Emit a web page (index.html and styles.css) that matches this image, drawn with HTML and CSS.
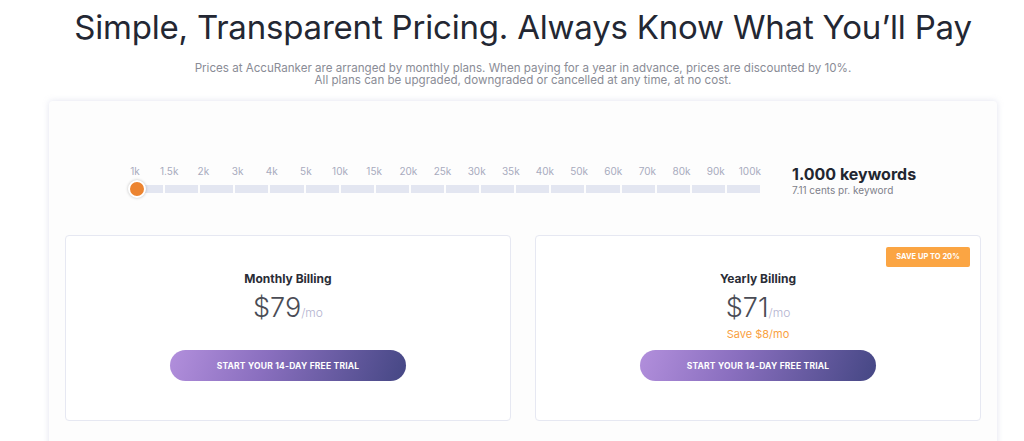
FILE: index.html
```html
<!DOCTYPE html>
<html lang="en">
<head>
  <meta charset="UTF-8">
  <meta name="viewport" content="width=device-width, initial-scale=1.0">
  <title>Pricing</title>
  <link rel="stylesheet" href="styles.css">
</head>
<body>
  <h1 class="title">Simple, Transparent Pricing. Always Know What You’ll Pay</h1>
  <p class="intro">
    Prices at AccuRanker are arranged by monthly plans. When paying for a year in advance, prices are discounted by 10%.<br>
    All plans can be upgraded, downgraded or cancelled at any time, at no cost.
  </p>

  <div class="panel">
    <div class="slider-row">
      <div class="slider">
        <div class="ticks">
          <span>1k</span><span>1.5k</span><span>2k</span><span>3k</span><span>4k</span>
          <span>5k</span><span>10k</span><span>15k</span><span>20k</span><span>25k</span>
          <span>30k</span><span>35k</span><span>40k</span><span>50k</span><span>60k</span>
          <span>70k</span><span>80k</span><span>90k</span><span>100k</span>
        </div>
        <div class="track">
          <span></span><span></span><span></span><span></span><span></span><span></span>
          <span></span><span></span><span></span><span></span><span></span><span></span>
          <span></span><span></span><span></span><span></span><span></span><span></span>
          <div class="knob"></div>
        </div>
      </div>
      <div class="keyword-info">
        <div class="keyword-count">1.000 keywords</div>
        <div class="keyword-price">7.11 cents pr. keyword</div>
      </div>
    </div>

    <div class="plans">
      <div class="plan">
        <h2>Monthly Billing</h2>
        <div class="price">$79<span>/mo</span></div>
        <div class="save"></div>
        <button class="trial">Start your 14-day free trial</button>
      </div>
      <div class="plan">
        <div class="badge">Save up to 20%</div>
        <h2>Yearly Billing</h2>
        <div class="price">$71<span>/mo</span></div>
        <div class="save">Save $8/mo</div>
        <button class="trial">Start your 14-day free trial</button>
      </div>
    </div>
  </div>
</body>
</html>
```

FILE: styles.css
```css
body {
  margin: 0;
  background-color: #ffffff;
  font-family: Inter, "Noto Sans", sans-serif;
  color: #232733;
  overflow: hidden;
}

.title {
  margin: 5px 0 0;
  font-size: 33px;
  line-height: 44px;
  font-weight: 400;
  text-align: center;
  padding-left: 22px;
  letter-spacing: -0.2px;
}

.intro {
  margin: 13px 0 0;
  padding-left: 22px;
  font-size: 11.6px;
  line-height: 12px;
  color: #8a8c96;
  text-align: center;
}

.panel {
  margin: 15px 0 0 49px;
  width: 948px;
  height: 400px;
  box-sizing: border-box;
  padding: 0 16px;
  background-color: #fdfdfd;
  border-radius: 4px;
  box-shadow: 0 0 6px rgba(170, 175, 210, 0.35);
}

/* slider */
.slider-row {
  display: flex;
  align-items: center;
  height: 134px;
  padding-top: 20px;
  box-sizing: border-box;
}

.slider {
  margin-left: 53px;
  width: 650px;
}

.ticks {
  display: grid;
  grid-template-columns: repeat(19, 34.17px);
  font-size: 10px;
  line-height: 14px;
  color: #a8abbe;
  text-align: center;
}

.track {
  position: relative;
  display: flex;
  gap: 2px;
  margin: 7px 0 0 12px;
  width: 630px;
}

.track span {
  flex: 1;
  height: 8px;
  background-color: #e3e6f1;
}

.track span:first-child {
  border-radius: 4px 0 0 4px;
}

.track span:last-child {
  border-radius: 0 4px 4px 0;
}

.knob {
  position: absolute;
  left: -2px;
  top: -5px;
  width: 14px;
  height: 14px;
  border-radius: 50%;
  background-color: #ec8430;
  border: 2px solid #ffffff;
  box-shadow: 0 0 3px rgba(0, 0, 0, 0.25);
}

.keyword-info {
  margin-left: 24px;
  margin-top: 4px;
}

.keyword-count {
  font-size: 16px;
  line-height: 20px;
  font-weight: 700;
  color: #222630;
}

.keyword-price {
  font-size: 10px;
  line-height: 12px;
  color: #7d7f8a;
}

/* plan cards */
.plans {
  display: flex;
  gap: 24px;
}

.plan {
  position: relative;
  flex: 1;
  height: 186px;
  box-sizing: border-box;
  padding-top: 35px;
  background-color: #ffffff;
  border: 1px solid #e6e8f2;
  border-radius: 4px;
  text-align: center;
}

.plan h2 {
  margin: 0;
  font-size: 12px;
  line-height: 16px;
  font-weight: 700;
  color: #2a2d36;
}

.price {
  margin-top: 5px;
  font-size: 27px;
  line-height: 32px;
  font-weight: 300;
  color: #4a4c55;
}

.price span {
  font-size: 12px;
  color: #b3b3cf;
}

.save {
  height: 12px;
  margin: -1px 0 10px;
  font-size: 11px;
  line-height: 12px;
  color: #f9a13f;
}

.trial {
  width: 236px;
  height: 31px;
  border: none;
  border-radius: 16px;
  background: linear-gradient(110deg, #b28fdc 0%, #8a6fbf 40%, #454784 100%);
  color: #ffffff;
  font-family: inherit;
  font-size: 8.5px;
  font-weight: 700;
  letter-spacing: 0.2px;
  text-transform: uppercase;
}

.badge {
  position: absolute;
  top: 11px;
  right: 10px;
  width: 84px;
  height: 20px;
  line-height: 20px;
  border-radius: 2px;
  background-color: #fba543;
  color: #ffffff;
  font-size: 7.5px;
  font-weight: 700;
  text-transform: uppercase;
}
```
